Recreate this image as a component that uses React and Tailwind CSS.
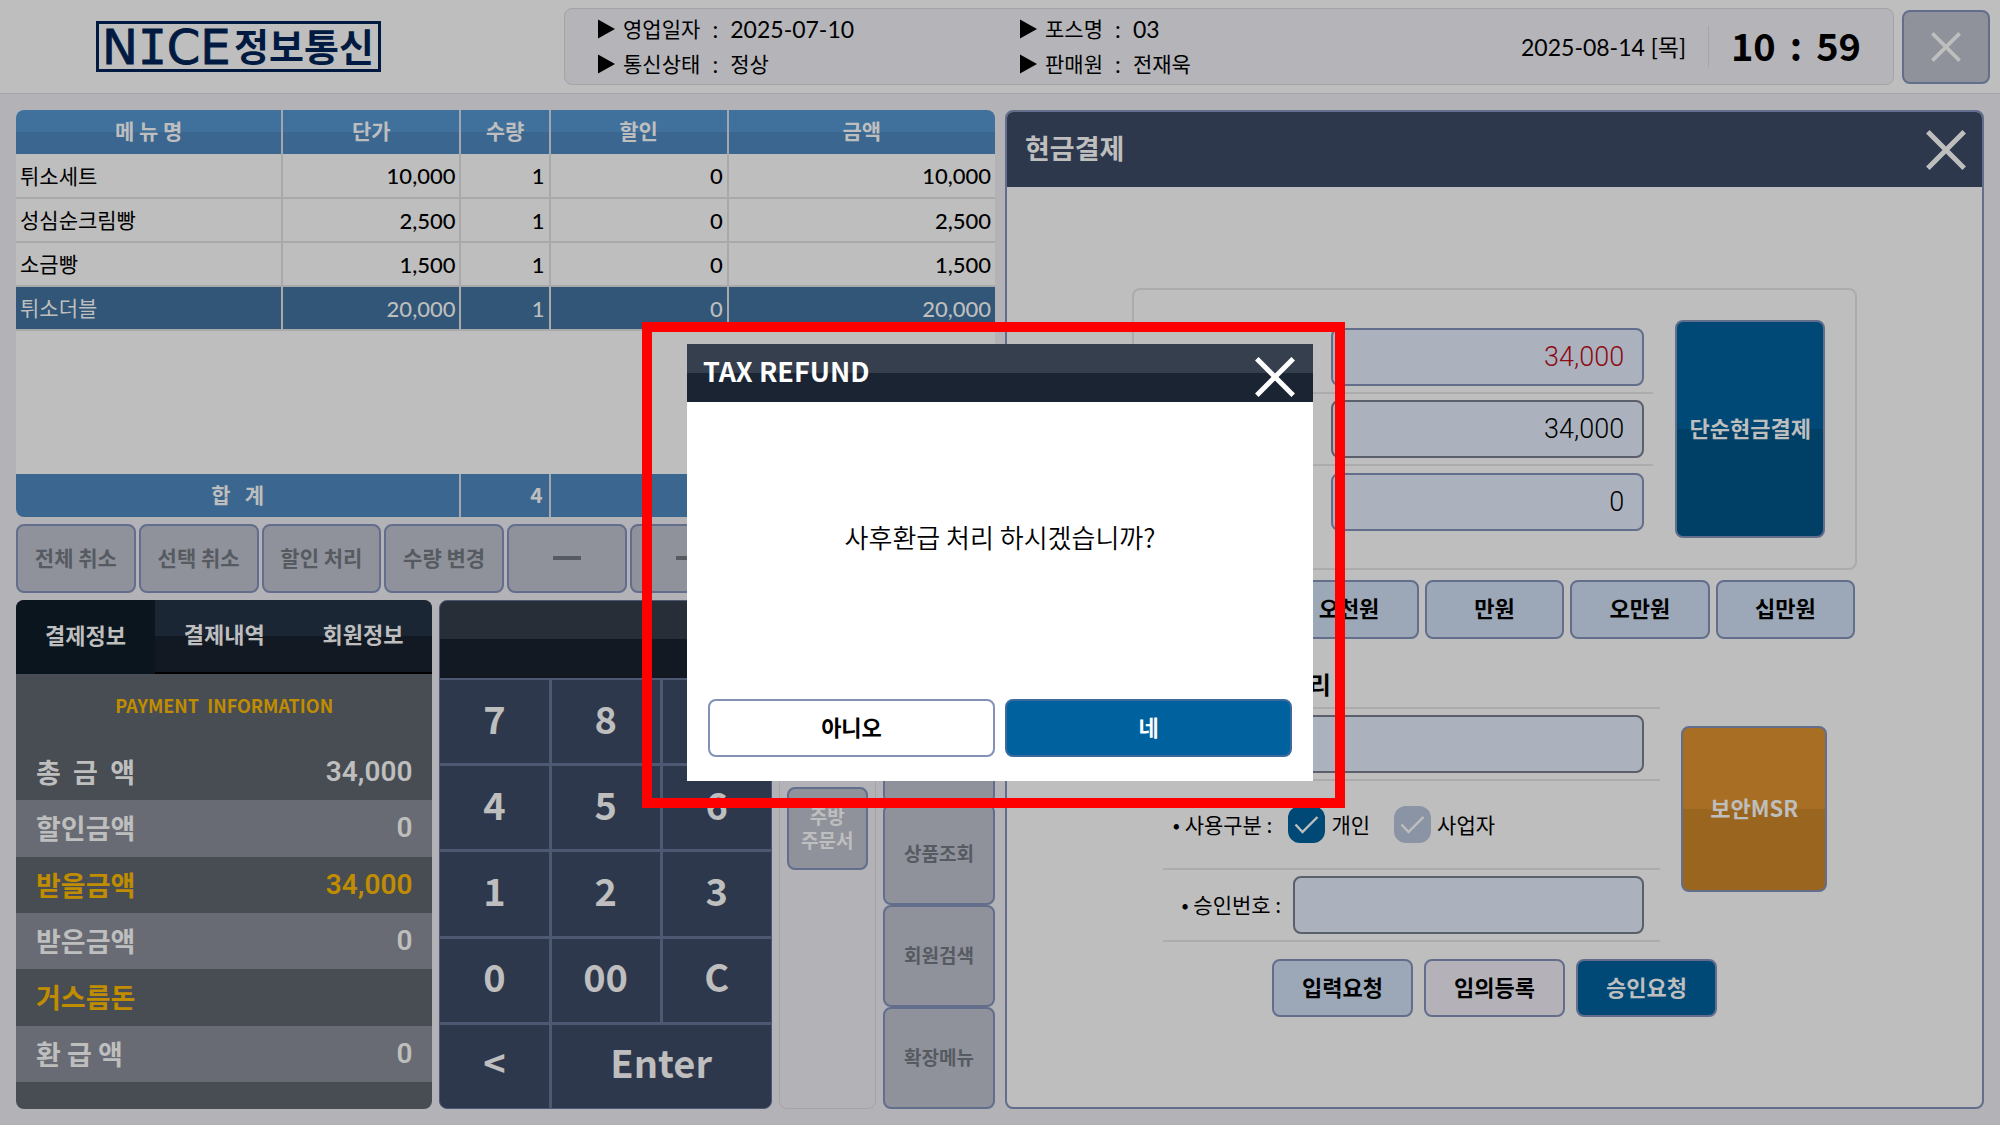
import React from 'react';
import clsx from 'clsx';

// ─── Data ────────────────────────────────────────────────────────────────────

const ORDER_ROWS = [
  { name: '튀소세트', price: '10,000', qty: 1, discount: 0, amount: '10,000' },
  { name: '성심순크림빵', price: '2,500', qty: 1, discount: 0, amount: '2,500' },
  { name: '소금빵', price: '1,500', qty: 1, discount: 0, amount: '1,500' },
  { name: '튀소더블', price: '20,000', qty: 1, discount: 0, amount: '20,000', selected: true },
];

const ORDER_ACTIONS = ['전체 취소', '선택 취소', '할인 처리', '수량 변경', '—', '—', '', ''];

const PAYMENT_ROWS = [
  { label: '총  금  액', value: '34,000' },
  { label: '할인금액', value: '0' },
  { label: '받을금액', value: '34,000', accent: true },
  { label: '받은금액', value: '0' },
  { label: '거스름돈', value: '', accent: true },
  { label: '환 급 액', value: '0' },
];

const KEYS = ['7', '8', '9', '4', '5', '6', '1', '2', '3', '0', '00', 'C', '<', 'Enter'];

const SIDE_MENU = ['', '', '상품조회', '회원검색', '확장메뉴'];

const CASH_FIELDS = [
  { label: '받을금액', value: '34,000', className: 'border-[#626e8c] text-[#8e0a14]' },
  { label: '받은금액', value: '34,000', className: 'border-[#5a5f6a] text-black' },
  { label: '거스름돈', value: '0', className: 'border-[#626e8c] text-black' },
];

const BILLS = ['천원', '오천원', '만원', '오만원', '십만원'];

// ─── Shared pieces ───────────────────────────────────────────────────────────

const CloseIcon = ({ className, stroke = 5 }) => (
  <svg viewBox="0 0 40 40" className={className} fill="none" stroke="currentColor" strokeWidth={stroke} aria-hidden="true">
    <path d="M1.8 1.8 38.2 38.2M38.2 1.8 1.8 38.2" />
  </svg>
);

const InfoItem = ({ label, value }) => (
  <div className="flex items-center whitespace-pre">
    <svg viewBox="0 0 17 20" className="mr-2 h-5 w-[17px]" fill="currentColor" aria-hidden="true">
      <path d="M0 .5 17 10 0 19.5z" />
    </svg>
    <span className="text-[21px]">{label}</span>
    <span className="w-[30px] text-center">:</span>
    <span>{value}</span>
  </div>
);

const CheckOption = ({ label, defaultChecked }) => (
  <label className="flex items-center gap-1.5">
    <span className="relative flex">
      <input
        type="checkbox"
        defaultChecked={defaultChecked}
        className="size-[37px] appearance-none rounded-xl bg-[#8a94a5] checked:bg-[#004976]"
      />
      <svg viewBox="0 0 37 37" className="pointer-events-none absolute inset-0 size-[37px]" fill="none" stroke="#bebebe" strokeWidth="2.4" aria-hidden="true">
        <path d="M7.5 18.5 14.5 26 29.5 11" />
      </svg>
    </span>
    {label}
  </label>
);

// ─── Header ──────────────────────────────────────────────────────────────────

const Logo = () => (
  <svg viewBox="0 0 285 51" className="h-[51px] w-[285px] overflow-visible" role="img" aria-label="NICE정보통신">
    <rect x="1.5" y="1.5" width="282" height="48" fill="none" stroke="#001a41" strokeWidth="3" />
    <text x="6" y="43" fontSize="48" fill="#001a41" stroke="#001a41" strokeWidth="0.8" fontFamily="'DejaVu Sans', sans-serif">
      N<tspan fontFamily="'DejaVu Sans Mono', monospace">I</tspan>CE
    </text>
    <text x="138" y="40" fontSize="38" fontWeight="700" fill="#001a41" fontFamily="'Noto Sans CJK KR', sans-serif">
      정보통신
    </text>
  </svg>
);

const Header = () => (
  <header className="flex h-[94px] items-center border-b border-[#a6a6a6] bg-[#bebebe] pr-2.5">
    <div className="w-[564px] pl-24">
      <Logo />
    </div>
    <div className="flex h-[77px] flex-1 items-center rounded-lg border border-[#a4a4a4] bg-[#b4b4b9] pr-8 pl-[33px] text-[23px] leading-[34px]">
      <div className="w-[422px]">
        <InfoItem label="영업일자" value="2025-07-10" />
        <InfoItem label="통신상태" value={<span className="text-[21px]">정상</span>} />
      </div>
      <div className="flex-1">
        <InfoItem label="포스명" value="03" />
        <InfoItem label="판매원" value={<span className="text-[21px]">전재욱</span>} />
      </div>
      <time className="border-r border-[#a6a6a6] pr-[22px] leading-[42px]">2025-08-14 [목]</time>
      <time className="flex gap-3.5 pb-1 pl-[22px] font-['Noto_Sans_CJK_KR',sans-serif] text-[38px] font-bold">
        <span>10</span>
        <span>:</span>
        <span>59</span>
      </time>
    </div>
    <button
      type="button"
      aria-label="종료"
      className="ml-2 flex h-[74px] w-[88px] items-center justify-center rounded-lg border-2 border-[#626e8c] bg-[#8f929b] text-[#bebebe]"
    >
      <CloseIcon className="size-[30px]" />
    </button>
  </header>
);

// ─── Order table ─────────────────────────────────────────────────────────────

const HEAD_CELL = 'border-r-2 border-[#a3a6aa] pb-0.5 last:border-r-0';
const BODY_CELL = 'border-r-2 border-[#a9a9a9] px-1 text-right font-[Lato,sans-serif] text-[22px] font-medium last:border-r-0';

const OrderTable = () => (
  <div className="overflow-hidden rounded-lg bg-[#bebebe]">
    <table className="w-full table-fixed text-[21px]">
      <colgroup>
        <col className="w-[27.2%]" />
        <col className="w-[18.2%]" />
        <col className="w-[9.1%]" />
        <col className="w-[18.2%]" />
        <col />
      </colgroup>
      <thead>
        <tr className="h-11 bg-[linear-gradient(#40709c_50%,#3b668f_50%)] text-[#bebebe]">
          {['메 뉴 명', '단가', '수량', '할인', '금액'].map((title) => (
            <th key={title} className={clsx(HEAD_CELL, 'font-bold')}>{title}</th>
          ))}
        </tr>
      </thead>
      <tbody>
        {ORDER_ROWS.map((row) => (
          <tr
            key={row.name}
            className={clsx('h-11 border-b-2 border-[#a9a9a9]', row.selected && 'bg-[#315677] text-[#bebebe]')}
          >
            <td className="border-r-2 border-[#a9a9a9] px-1">{row.name}</td>
            <td className={BODY_CELL}>{row.price}</td>
            <td className={BODY_CELL}>{row.qty}</td>
            <td className={BODY_CELL}>{row.discount}</td>
            <td className={BODY_CELL}>{row.amount}</td>
          </tr>
        ))}
        <tr className="h-36">
          <td colSpan={5} />
        </tr>
      </tbody>
      <tfoot>
        <tr className="h-[43px] bg-[#3b668f] font-bold text-[#bebebe]">
          <td colSpan={2} className={clsx(HEAD_CELL, 'text-center whitespace-pre')}>합   계</td>
          <td className={clsx(HEAD_CELL, 'px-1.5 text-right')}>4</td>
          <td className={HEAD_CELL} />
          <td />
        </tr>
      </tfoot>
    </table>
  </div>
);

const OrderActions = () => (
  <div className="grid grid-cols-8 gap-[3px]">
    {ORDER_ACTIONS.map((label, index) => (
      <button
        key={index}
        type="button"
        className="h-[69px] rounded-lg border-2 border-[#626e8c] bg-[#8f929b] pb-0.5 text-[21px] font-bold text-[#565a61]"
      >
        {label === '—' ? <span className="mx-auto block h-1 w-7 bg-[#565a61]" /> : label}
      </button>
    ))}
  </div>
);

// ─── Payment summary and keypad ──────────────────────────────────────────────

const PaymentInfo = () => (
  <section className="flex flex-col overflow-hidden rounded-lg bg-[#484c53]">
    <div className="grid h-[74px] grid-cols-3 text-[22px] font-bold text-[#bebebe] *:pb-1.5">
      <button type="button" className="bg-[#0a151e]">결제정보</button>
      <button type="button" className="border-b-2 border-black bg-[linear-gradient(#1b2635_50%,#131922_50%)]">결제내역</button>
      <button type="button" className="border-b-2 border-black bg-[linear-gradient(#1b2635_50%,#131922_50%)]">회원정보</button>
    </div>
    <h2 className="flex h-[70px] items-center justify-center pb-2 text-lg font-bold whitespace-pre text-[#c08c00]">
      PAYMENT  INFORMATION
    </h2>
    <dl className="grid h-[338px] grid-rows-6">
      {PAYMENT_ROWS.map((row, index) => (
        <div
          key={row.label}
          className={clsx(
            'flex items-center justify-between px-5 text-[27px] font-bold',
            index % 2 === 1 && 'bg-[#686b73]',
            row.accent ? 'text-[#c08c00]' : 'text-[#bebebe]'
          )}
        >
          <dt className="whitespace-pre">{row.label}</dt>
          <dd className="font-[Roboto,sans-serif] text-[28px] font-semibold">{row.value}</dd>
        </div>
      ))}
    </dl>
  </section>
);

const Keypad = () => (
  <section className="flex flex-col overflow-hidden rounded-lg border border-[#4d5872] bg-[#4d5872]">
    <div className="h-[77px] bg-[linear-gradient(#272e37_50%,#131922_50%)]" />
    <div className="grid flex-1 grid-cols-3 grid-rows-5 gap-[3px] pt-0.5 text-[38px] font-bold text-[#bebebe]">
      {KEYS.map((key) => (
        <button key={key} type="button" className={clsx('bg-[#2e384c] pb-2 leading-10', key === 'Enter' && 'col-span-2')}>
          {key}
        </button>
      ))}
    </div>
  </section>
);

const SideMenus = () => (
  <>
    <div className="rounded-lg border border-[#a4a4a4] px-[7px] pt-[186px]">
      <button
        type="button"
        className="h-[83px] w-full rounded-lg border-2 border-[#626e8c] bg-[#8f929b] pb-0.5 text-[19px] leading-6 font-bold text-[#bebebe]"
      >
        주방
        <br />
        주문서
      </button>
    </div>
    <div className="grid grid-rows-5">
      {SIDE_MENU.map((label, index) => (
        <button
          key={index}
          type="button"
          className="rounded-lg border-2 border-[#626e8c] bg-[#8f929b] pb-0.5 text-[19px] font-bold text-[#565a61]"
        >
          {label}
        </button>
      ))}
    </div>
  </>
);

// ─── Cash payment panel ──────────────────────────────────────────────────────

const FIELD = 'h-[58px] rounded-lg border-2 bg-[#abb2bd]';
const ACTION = 'rounded-lg border-2 border-[#626e8c] pb-1 text-[22px] font-bold';

const CashPanel = () => (
  <section className="overflow-hidden rounded-lg border-2 border-[#626e8c] bg-[#bebebe]">
    <div className="flex h-[75px] items-center justify-between bg-[#2e384c] pr-4 pl-[18px] text-[#bebebe]">
      <h1 className="pb-0.5 text-[27px] font-bold">현금결제</h1>
      <button type="button" aria-label="닫기">
        <CloseIcon className="size-10" />
      </button>
    </div>

    <div className="mx-auto mt-[101px] w-[74.4%]">
      <div className="flex gap-[22px] rounded-lg border-2 border-[#acacac] px-[30px] py-[30px]">
        <div className="flex-1 pt-0.5">
          {CASH_FIELDS.map((field) => (
            <div key={field.label} className="flex h-[72px] items-center justify-end border-b-2 border-[#acacac] pr-[9px] last:border-b-0">
              <input
                aria-label={field.label}
                defaultValue={field.value}
                className={clsx(FIELD, 'w-[313px] px-[18px] text-right font-[Roboto,sans-serif] text-[27px] font-[350]', field.className)}
              />
            </div>
          ))}
        </div>
        <button type="button" className={clsx(ACTION, 'w-[150px] bg-[linear-gradient(#004976_50%,#003f66_50%)] text-[#bebebe]')}>
          단순현금결제
        </button>
      </div>

      <div className="mt-2.5 grid grid-cols-5 gap-1.5 px-0.5">
        {BILLS.map((bill) => (
          <button key={bill} type="button" className={clsx(ACTION, 'h-[59px] bg-[#9ca8b7]')}>
            {bill}
          </button>
        ))}
      </div>

      <div className="flex gap-[21px] pr-[30px] pl-[31px] text-[21px]">
        <div className="flex-1 *:border-b-2 *:border-[#acacac]">
          <h2 className="flex h-[70px] items-center pt-[22px] pl-2 text-2xl font-bold">현금영수증 처리</h2>
          <div className="flex h-[72px] items-center justify-end pr-4">
            <input aria-label="식별번호" className={clsx(FIELD, 'w-[351px] border-[#5a5f6a] px-4')} />
          </div>
          <div className="flex h-[89px] items-center pl-2.5">
            <span className="mr-4">• 사용구분 :</span>
            <CheckOption label="개인" defaultChecked />
            <span className="w-6" />
            <CheckOption label="사업자" />
          </div>
          <div className="flex h-[72px] items-center justify-end pr-4">
            <label htmlFor="approval" className="mr-3">• 승인번호 :</label>
            <input id="approval" className={clsx(FIELD, 'w-[351px] border-[#5a5f6a] px-4')} />
          </div>
        </div>
        <button type="button" className={clsx(ACTION, 'mt-[87px] h-[166px] w-[146px] bg-[linear-gradient(#a86e23_50%,#99651f_50%)] text-[#bebebe]')}>
          보안MSR
        </button>
      </div>

      <div className="mt-[17px] flex justify-center gap-[11px] *:h-[58px] *:w-[141px]">
        <button type="button" className={clsx(ACTION, 'bg-[#9ca8b7]')}>입력요청</button>
        <button type="button" className={clsx(ACTION, 'bg-[#b4b2b8]')}>임의등록</button>
        <button type="button" className={clsx(ACTION, 'bg-[#004976] text-[#bebebe]')}>승인요청</button>
      </div>
    </div>
  </section>
);

// ─── Tax refund dialog ───────────────────────────────────────────────────────

const TaxRefundDialog = () => (
  <div className="fixed inset-0 flex items-center justify-center font-['Noto_Sans_CJK_KR',sans-serif]">
    <div role="dialog" aria-labelledby="tax-refund-title" className="relative w-[626px] bg-white">
      <div className="pointer-events-none absolute -top-[22px] -right-8 -bottom-[27px] -left-[45px] border-[10px] border-[#ff0000]" />
      <div className="flex h-[58px] items-center justify-between bg-[linear-gradient(#363f4d_50%,#1b2433_50%)] pr-[18px] pl-4 text-white">
        <h2 id="tax-refund-title" className="pb-1 text-[27px] font-bold">TAX REFUND</h2>
        <button type="button" aria-label="닫기" className="pt-2">
          <CloseIcon className="size-10" />
        </button>
      </div>
      <p className="flex h-[273px] items-center justify-center pb-1 text-[26px] font-[350]">사후환급 처리 하시겠습니까?</p>
      <div className="grid grid-cols-2 gap-2.5 px-[21px] py-6 text-[22px] font-bold *:pb-1">
        <button type="button" className="h-[58px] rounded-lg border-2 border-[#8291b5] bg-white">아니오</button>
        <button type="button" className="h-[58px] rounded-lg border-2 border-[#3b6a9e] bg-[#00619f] text-white">네</button>
      </div>
    </div>
  </div>
);

// ─── App ─────────────────────────────────────────────────────────────────────

export default function App() {
  return (
    <div className="flex min-h-screen flex-col bg-[#b2b2b7] font-[Lato,'Noto_Sans_CJK_KR',sans-serif] text-black">
      <Header />
      <main className="grid flex-1 grid-cols-2 gap-2.5 px-4 pt-4 pb-4 font-['Noto_Sans_CJK_KR',sans-serif]">
        <div className="flex flex-col gap-[7px]">
          <OrderTable />
          <OrderActions />
          <div className="grid flex-1 grid-cols-[416fr_332fr_97fr_112fr] gap-[7px]">
            <PaymentInfo />
            <Keypad />
            <SideMenus />
          </div>
        </div>
        <CashPanel />
      </main>
      <TaxRefundDialog />
    </div>
  );
}
